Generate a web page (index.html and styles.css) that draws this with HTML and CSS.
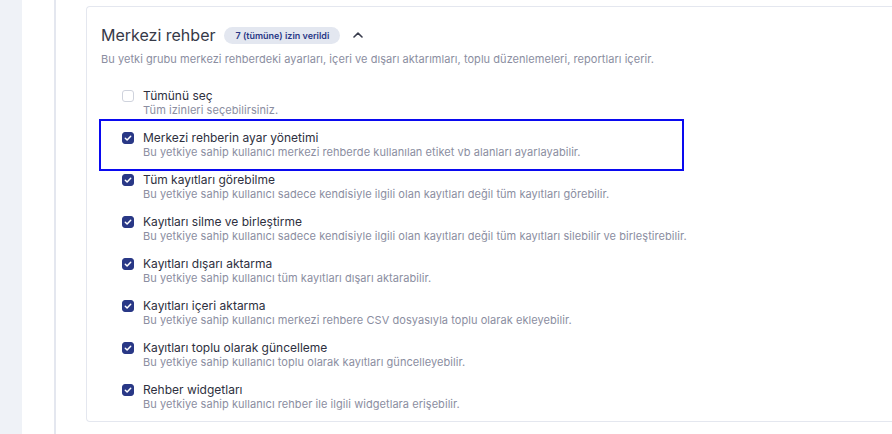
FILE: index.html
```html
<!doctype html>
<html lang="tr">
  <head>
    <meta charset="UTF-8" />
    <meta name="viewport" content="width=device-width, initial-scale=1.0" />
    <title>Merkezi rehber – İzinler</title>
    <link rel="stylesheet" href="styles.css">
  </head>
  <body>
    <div class="rail"></div>
    <div class="sidebar"></div>

    <main class="content">
      <section class="group">
        <header class="group-head">
          <h2>Merkezi rehber</h2>
          <span class="badge">7 (tümüne) izin verildi</span>
          <svg class="chevron" width="10" height="6" viewBox="0 0 10 6" aria-hidden="true">
            <path d="M1 5 L5 1.2 L9 5" fill="none" stroke="#3a3d4d" stroke-width="1.6" stroke-linecap="round" stroke-linejoin="round" />
          </svg>
        </header>
        <p class="group-desc">Bu yetki grubu merkezi rehberdeki ayarları, içeri ve dışarı aktarımları, toplu düzenlemeleri, reportları içerir.</p>

        <ul class="perms">
          <li class="perm">
            <span class="box"></span>
            <div>
              <div class="perm-title">Tümünü seç</div>
              <div class="perm-desc">Tüm izinleri seçebilirsiniz.</div>
            </div>
          </li>
          <li class="perm is-marked">
            <span class="box checked"></span>
            <div>
              <div class="perm-title">Merkezi rehberin ayar yönetimi</div>
              <div class="perm-desc">Bu yetkiye sahip kullanıcı merkezi rehberde kullanılan etiket vb alanları ayarlayabilir.</div>
            </div>
          </li>
          <li class="perm">
            <span class="box checked"></span>
            <div>
              <div class="perm-title">Tüm kayıtları görebilme</div>
              <div class="perm-desc">Bu yetkiye sahip kullanıcı sadece kendisiyle ilgili olan kayıtları değil tüm kayıtları görebilir.</div>
            </div>
          </li>
          <li class="perm">
            <span class="box checked"></span>
            <div>
              <div class="perm-title">Kayıtları silme ve birleştirme</div>
              <div class="perm-desc">Bu yetkiye sahip kullanıcı sadece kendisiyle ilgili olan kayıtları değil tüm kayıtları silebilir ve birleştirebilir.</div>
            </div>
          </li>
          <li class="perm">
            <span class="box checked"></span>
            <div>
              <div class="perm-title">Kayıtları dışarı aktarma</div>
              <div class="perm-desc">Bu yetkiye sahip kullanıcı tüm kayıtları dışarı aktarabilir.</div>
            </div>
          </li>
          <li class="perm">
            <span class="box checked"></span>
            <div>
              <div class="perm-title">Kayıtları içeri aktarma</div>
              <div class="perm-desc">Bu yetkiye sahip kullanıcı merkezi rehbere CSV dosyasıyla toplu olarak ekleyebilir.</div>
            </div>
          </li>
          <li class="perm">
            <span class="box checked"></span>
            <div>
              <div class="perm-title">Kayıtları toplu olarak güncelleme</div>
              <div class="perm-desc">Bu yetkiye sahip kullanıcı toplu olarak kayıtları güncelleyebilir.</div>
            </div>
          </li>
          <li class="perm">
            <span class="box checked"></span>
            <div>
              <div class="perm-title">Rehber widgetları</div>
              <div class="perm-desc">Bu yetkiye sahip kullanıcı rehber ile ilgili widgetlara erişebilir.</div>
            </div>
          </li>
        </ul>
      </section>
    </main>
  </body>
</html>
```

FILE: styles.css
```css
:root {
  --rail: #eff2f7;
  --line: #e4e7ef;
  --title: #363948;
  --text: #2e3040;
  --muted: #8b8ea1;
  --navy: #293886;
  --badge-bg: #e3e7f0;
  --mark: #0a0af0;
}

* {
  box-sizing: border-box;
}

html,
body {
  height: 100%;
}

body {
  margin: 0;
  display: flex;
  background: #fff;
  font-family: Inter, 'Open Sans', sans-serif;
  color: var(--text);
  overflow: hidden;
}

.rail {
  width: 22px;
  flex: none;
  background: var(--rail);
}

.sidebar {
  width: 34px;
  flex: none;
  border-right: 2px solid var(--line);
}

.content {
  flex: 1;
  padding: 6px 0 0 30px;
  min-width: 0;
}

.group {
  border: 1px solid var(--line);
  border-right: none;
  border-radius: 4px 0 0 4px;
  padding: 18px 0 10px 14px;
}

.group-head {
  display: flex;
  align-items: center;
  height: 20px;
}

.group-head h2 {
  margin: 0;
  font-size: 16px;
  font-weight: 400;
  color: var(--title);
  line-height: 20px;
}

.badge {
  margin-left: 9px;
  padding: 0 11px;
  height: 17px;
  line-height: 17px;
  border-radius: 9px;
  background: var(--badge-bg);
  color: var(--navy);
  font-size: 9px;
  font-weight: 600;
}

.chevron {
  margin-left: 13px;
}

.group-desc {
  margin: 7px 0 0;
  font-size: 11px;
  line-height: 14px;
  letter-spacing: 0.05px;
  color: var(--muted);
}

.perms {
  list-style: none;
  margin: 23px 0 0;
  padding: 0 0 0 21px;
  display: flex;
  flex-direction: column;
  gap: 14px;
}

.perm {
  position: relative;
  display: flex;
  align-items: flex-start;
  gap: 9px;
}

.perm.is-marked::after {
  content: '';
  position: absolute;
  left: -23px;
  top: -12px;
  width: 581px;
  bottom: -12px;
  border: 2px solid var(--mark);
  pointer-events: none;
}

.box {
  flex: none;
  width: 12px;
  height: 12px;
  margin-top: 1px;
  border: 1px solid #cfd3dd;
  border-radius: 3px;
  background: #fff;
}

.box.checked {
  border-color: var(--navy);
  background: var(--navy) url("data:image/svg+xml,%3Csvg xmlns='http://www.w3.org/2000/svg' width='12' height='12' viewBox='0 0 12 12'%3E%3Cpath d='M3.3 6.2 L5.1 8 L8.7 4.2' fill='none' stroke='white' stroke-width='1.5' stroke-linecap='round' stroke-linejoin='round'/%3E%3C/svg%3E") center / 12px 12px no-repeat;
}

.perm-title {
  font-size: 12px;
  line-height: 14px;
  color: var(--text);
}

.perm-desc {
  font-size: 11px;
  line-height: 14px;
  letter-spacing: 0.06px;
  color: var(--muted);
}
```
